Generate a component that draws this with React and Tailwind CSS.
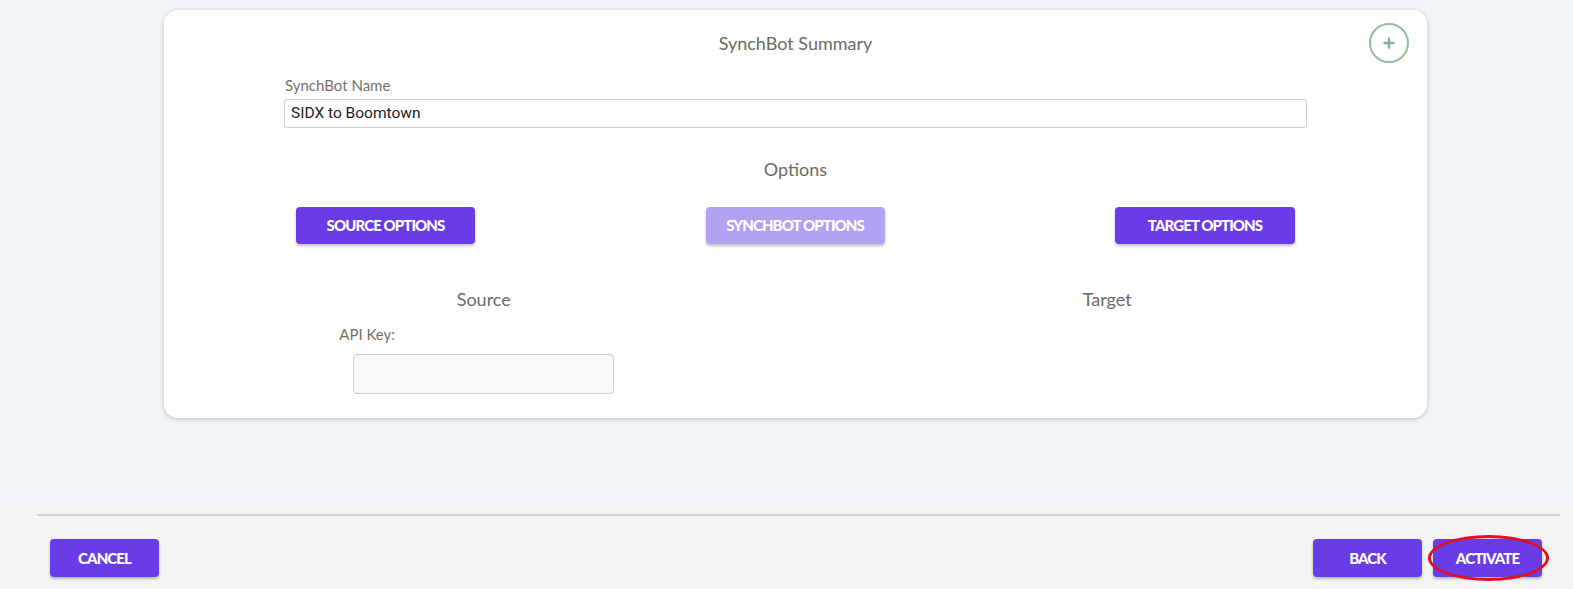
import React from 'react';

function PurpleButton({ children, light, className = '' }) {
  return (
    <button
      className={`h-[37px] rounded-[4px] text-white font-black uppercase text-[15px] tracking-[-0.9px] shadow-[0_2px_3px_rgba(0,0,0,0.25)] ${
        light ? 'bg-[#b3a1f2]' : 'bg-[#6a3ce8]'
      } ${className}`}
      style={{ fontFamily: 'Lato, sans-serif' }}
    >
      {children}
    </button>
  );
}

export default function App() {
  return (
    <div className="w-[1573px] h-[589px] overflow-hidden flex flex-col bg-[#f1f4f7]" style={{ fontFamily: 'Lato, sans-serif' }}>
      {/* Card area */}
      <div className="h-[506px] pt-[10px]">
        <div className="ml-[164px] w-[1263px] h-[408px] bg-white rounded-[14px] shadow-[0_1px_4px_rgba(0,0,0,0.22)] relative px-2">
          <button className="absolute right-[18px] top-[13px] w-[40px] h-[40px] rounded-full border-2 border-[#94bd9c] flex items-center justify-center text-[#86b490]">
            <svg width="12" height="12" viewBox="0 0 12 12">
              <path d="M6 1.5v9M1.5 6h9" stroke="currentColor" strokeWidth="2.4" strokeLinecap="round" />
            </svg>
          </button>

          <h1 className="text-center text-[18px] text-[#6d6a63] pt-[21px] leading-[24px]">SynchBot Summary</h1>

          <div className="px-[112px] mt-[21px]">
            <label className="block text-[15px] text-[#75716a] leading-[18px] ml-[1px]">SynchBot Name</label>
            <div className="mt-[5px] h-[29px] border border-[#cfcfcf] rounded-[3px] flex items-center px-[6px] text-[15.5px] text-[#222]" style={{ fontFamily: 'Roboto, sans-serif' }}>
              SIDX to Boomtown
            </div>
          </div>

          <h2 className="text-center text-[18px] text-[#6d6a63] mt-[29px] leading-[24px]">Options</h2>

          <div className="px-[124px] mt-[26px] flex justify-between">
            <PurpleButton className="w-[179px]">Source Options</PurpleButton>
            <PurpleButton light className="w-[179px]">Synchbot Options</PurpleButton>
            <PurpleButton className="w-[180px]">Target Options</PurpleButton>
          </div>

          <div className="grid grid-cols-2 mt-[43px]">
            <div className="flex flex-col items-center">
              <h3 className="text-[18px] text-[#6d6a63] leading-[24px]">Source</h3>
              <div className="w-[261px]">
                <label className="block text-[15px] text-[#75716a] leading-[18px] mt-[14px] -ml-[14px]">API Key:</label>
                <div className="mt-[11px] h-[40px] bg-[#f8f8f8] border border-[#cccccc] rounded-[4px]" />
              </div>
            </div>
            <div className="flex flex-col items-center">
              <h3 className="text-[18px] text-[#6d6a63] leading-[24px]">Target</h3>
            </div>
          </div>
        </div>
      </div>

      {/* Footer */}
      <div className="flex-1 bg-[#f4f4f4] relative">
        <div className="ml-[37px] mr-[13px] mt-[8px] border-t-2 border-[#d2d2d2]" />
        <div className="flex items-center justify-between pl-[50px] pr-[31px] mt-[23px]">
          <PurpleButton className="w-[109px] h-[38px]">Cancel</PurpleButton>
          <div className="flex gap-[11px]">
            <PurpleButton className="w-[109px] h-[38px]">Back</PurpleButton>
            <div className="relative">
              <PurpleButton className="w-[109px] h-[38px]">Activate</PurpleButton>
              <div className="absolute -left-[5px] -top-[4px] w-[121px] h-[46px] rounded-[50%] border-[3px] border-[#e0101e] pointer-events-none" />
            </div>
          </div>
        </div>
      </div>
    </div>
  );
}
